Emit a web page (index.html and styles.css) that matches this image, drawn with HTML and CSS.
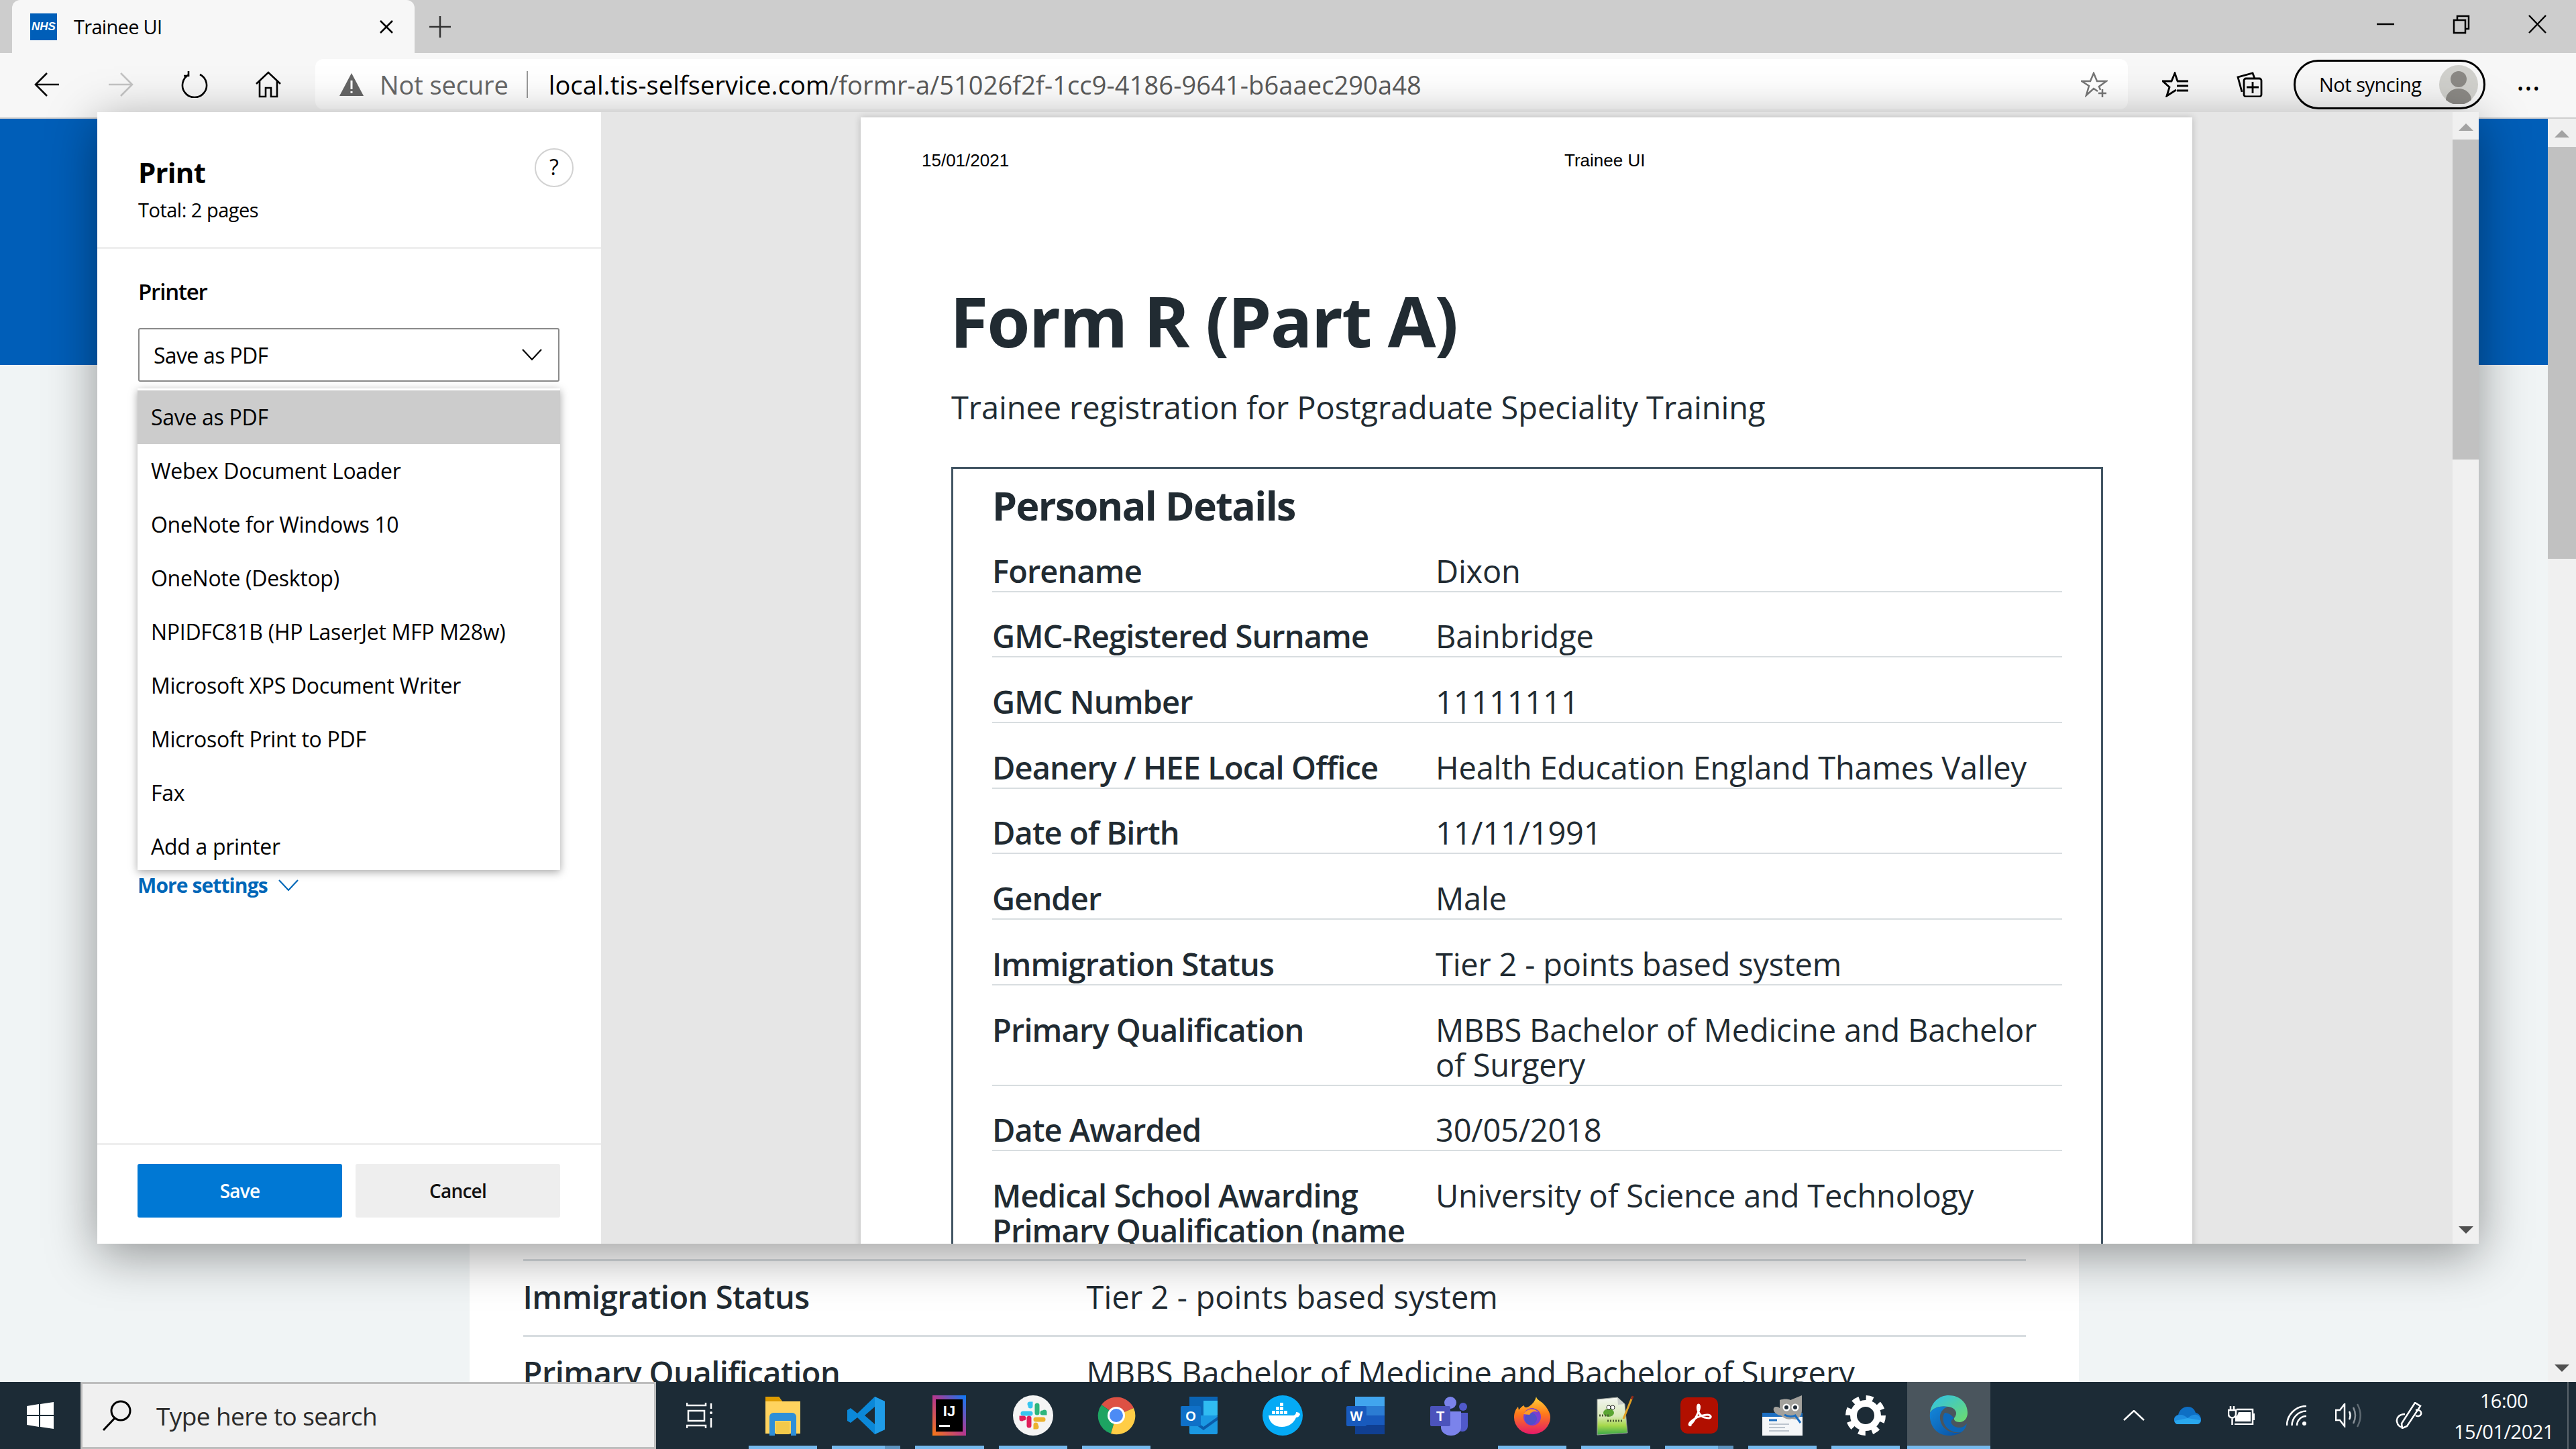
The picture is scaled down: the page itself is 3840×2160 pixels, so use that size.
FILE: index.html
```html
<!DOCTYPE html>
<html lang="en">
<head>
  <meta charset="UTF-8" />
  <title>Trainee UI</title>
  <link rel="stylesheet" href="styles.css">
</head>
<body>
<div class="screen">

  <!-- Browser tab strip -->
  <div class="tabstrip">
    <div class="tab">
      <span class="favicon">NHS</span>
      <span class="tab-title">Trainee UI</span>
      <svg class="tab-close" viewBox="0 0 24 24"><path d="M3 3l18 18M21 3L3 21"/></svg>
    </div>
    <svg class="tab-new" viewBox="0 0 32 32"><path d="M16 0v32M0 16h32"/></svg>
    <div class="window-controls">
      <svg viewBox="0 0 30 30"><path d="M2 15h26"/></svg>
      <svg viewBox="0 0 30 30"><path d="M4 9h17v19H4zM9 9V3h17v19h-5"/></svg>
      <svg viewBox="0 0 30 30"><path d="M3 2l25 26M28 2L3 28"/></svg>
    </div>
  </div>

  <!-- Address bar row -->
  <div class="toolbar">
    <svg class="nav-icon" viewBox="0 0 40 40"><path d="M38 20H3M20 3L3 20l17 17"/></svg>
    <svg class="nav-icon nav-off" viewBox="0 0 40 40"><path d="M2 20h35M20 3l17 17-17 17"/></svg>
    <svg class="nav-icon" viewBox="0 0 40 40"><path d="M12 5a18 18 0 1 0 16 0M11 0v7H4"/></svg>
    <svg class="nav-icon" viewBox="0 0 40 40"><path d="M2 19L20 2l18 17M7 15v23h9V25h8v13h9V15"/></svg>
    <div class="address">
      <svg class="warn" viewBox="0 0 38 36"><path d="M19 1l18 34H1z" fill="#666"/><path d="M19 12v13M19 28v3" stroke="#fff" stroke-width="3"/></svg>
      <span class="not-secure">Not secure</span>
      <span class="address-sep"></span>
      <span class="url"><b>local.tis-selfservice.com</b>/formr-a/51026f2f-1cc9-4186-9641-b6aaec290a48</span>
      <svg class="star" viewBox="0 0 40 38"><path d="M25 29l-6-4-11 10 4-14L1 14h13l5-12 5 12h14l-11 8 2 5"/><path d="M32 26v12M26 32h12"/></svg>
    </div>
    <svg class="tool-icon fav" viewBox="0 0 40 38"><path d="M23 14L19 2l-5 12H1l10 9-4 13 14-9"/><path d="M22 14h17M22 21h17M22 28h17" stroke-width="3"/></svg>
    <svg class="tool-icon coll" viewBox="0 0 40 38"><path d="M9 30L3 8l22-6 3 8"/><rect x="12" y="10" width="26" height="27" rx="3"/><path d="M25 15v17M16 23h18"/></svg>
    <div class="sync-pill">
      <span>Not syncing</span>
      <svg class="avatar" viewBox="0 0 58 58"><circle cx="29" cy="29" r="29" fill="#d0d0cc"/><circle cx="29" cy="21" r="12" fill="#8b8985"/><path d="M10 52a19 17 0 0 1 38 0 29 29 0 0 1-38 0z" fill="#8b8985"/></svg>
    </div>
    <span class="more-dots">&#8230;</span>
  </div>

  <!-- The page behind the print dialog -->
  <div class="page">
    <div class="page-main">
      <div class="page-head"></div>
      <div class="page-card">
        <div class="page-row"><span class="page-label">Immigration Status</span><span>Tier 2 - points based system</span></div>
        <div class="page-row"><span class="page-label">Primary Qualification</span><span>MBBS Bachelor of Medicine and Bachelor of Surgery</span></div>
      </div>
    </div>
    <div class="page-scroll">
      <span class="arrow-up"></span>
      <span class="thumb"></span>
      <span class="arrow-down"></span>
    </div>
  </div>

  <!-- Taskbar -->
  <div class="taskbar">
    <div class="start">
      <svg viewBox="0 0 40 40" width="40" height="40"><path d="M0 6l18-3v16H0zM20 3l20-3v19H20zM0 21h18v16L0 34zM20 21h20v19l-20-3z" fill="#fff"/></svg>
    </div>
    <div class="search">
      <svg class="search-icon" viewBox="0 0 48 48"><circle cx="30" cy="17" r="14"/><path d="M21 28L4 46"/></svg>
      <span>Type here to search</span>
    </div>
    <div class="task-apps">
      <div class="task"><svg viewBox="0 0 40 40" width="40" height="40" class="line-w"><path d="M1 1v4h28V1M1 39v-4h28v4M3 13h24v15H3z"/><circle cx="37" cy="16" r="2" fill="#fff" stroke="none"/><path d="M37 2v8M37 24v14"/></svg></div>
      <div class="task on"><svg viewBox="0 0 56 60" width="56" height="60"><path d="M2 2h20l5 7h27v48H2z" fill="#ffd35e"/><path d="M2 2h20l5 7H2z" fill="#dd9b00"/><path d="M8 60V32a6 6 0 0 1 6-6h28a6 6 0 0 1 6 6v28h-8V38H16v22z" fill="#2f8fd8"/><path d="M18 40h20v18H18z" fill="#f2c94a"/></svg></div>
      <div class="task on split"><svg viewBox="0 0 60 60" width="60" height="60"><path d="M43 2l15 7v42l-15 7L17 33l-10 8-5-3V22l5-3 10 8zM43 17L28 30l15 13z" fill="#0b88d8"/><path d="M43 2l15 7v42l-15 7z" fill="#1f9ce8"/></svg></div>
      <div class="task on"><svg viewBox="0 0 50 60" width="50" height="60"><defs><linearGradient id="ijg" x1="0" y1="1" x2="1" y2="0"><stop offset="0" stop-color="#f97a12"/><stop offset=".5" stop-color="#b5378e"/><stop offset="1" stop-color="#087cfa"/></linearGradient></defs><rect width="50" height="60" fill="url(#ijg)"/><rect x="5" y="6" width="40" height="48" fill="#000"/><text x="25" y="31" class="ij-text">IJ</text><rect x="10" y="44" width="16" height="3" fill="#fff"/></svg></div>
      <div class="task on"><svg viewBox="0 0 60 60" width="60" height="60"><circle cx="30" cy="30" r="30" fill="#f4f4f4"/><g stroke-width="7" stroke-linecap="round"><path d="M26 27H15" stroke="#36c5f0"/><path d="M25 13h1v3" stroke="#36c5f0"/><path d="M36 26V15" stroke="#2eb67d"/><path d="M47 25v1h-3" stroke="#2eb67d"/><path d="M34 36h11" stroke="#ecb22e"/><path d="M35 47h-1v-3" stroke="#ecb22e"/><path d="M24 34v11" stroke="#e01e5a"/><path d="M13 35v-1h3" stroke="#e01e5a"/></g></svg></div>
      <div class="task on"><svg viewBox="0 0 60 60" width="60" height="60"><path d="M30 30L8 14A28 28 0 0 1 56 19z" fill="#dd5144"/><path d="M30 30L8 14A28 28 0 0 0 22 57z" fill="#1da462"/><path d="M30 30L56 19A28 28 0 0 1 22 57z" fill="#ffcd46"/><circle cx="30" cy="30" r="13" fill="#fff"/><circle cx="30" cy="30" r="10" fill="#4c8bf5"/></svg></div>
      <div class="task"><svg viewBox="0 0 60 60" width="60" height="60"><rect x="15" y="2" width="42" height="30" fill="#0a64b4"/><rect x="15" y="30" width="42" height="28" rx="2" fill="#1a98e2"/><rect x="36" y="8" width="21" height="22" fill="#30bcf2"/><path d="M15 32l21 15 21-15v5L36 52 15 37z" fill="#0a5cab"/><rect x="2" y="16" width="30" height="30" rx="2" fill="#0f70c8"/><text x="17" y="38" class="tile-text">O</text></svg></div>
      <div class="task"><svg viewBox="0 0 60 60" width="60" height="60"><circle cx="30" cy="30" r="30" fill="#05aaf5"/><path d="M9 30h36c3 0 5-2 5-5 3 0 5 1 6 3-1 4-4 5-6 5-3 8-11 14-21 14-12 0-19-7-20-17z" fill="#fff"/><g fill="#fff"><rect x="14" y="23" width="5" height="5"/><rect x="20" y="23" width="5" height="5"/><rect x="26" y="23" width="5" height="5"/><rect x="32" y="23" width="5" height="5"/><rect x="20" y="17" width="5" height="5"/><rect x="26" y="17" width="5" height="5"/><rect x="26" y="11" width="5" height="5"/></g></svg></div>
      <div class="task"><svg viewBox="0 0 60 60" width="60" height="60"><rect x="14" y="2" width="44" height="56" rx="2" fill="#2b7cd3"/><rect x="14" y="2" width="44" height="14" fill="#41a5ee"/><rect x="14" y="30" width="44" height="14" fill="#185abd"/><rect x="14" y="44" width="44" height="14" fill="#103f91"/><rect x="1" y="16" width="30" height="30" rx="2" fill="#185abd"/><text x="16" y="38" class="tile-text">W</text></svg></div>
      <div class="task"><svg viewBox="0 0 60 60" width="60" height="60"><circle cx="32" cy="11" r="9" fill="#7b83eb"/><circle cx="51" cy="17" r="6" fill="#5059c9"/><path d="M42 26h16v20a8 8 0 0 1-16 0z" fill="#5059c9"/><path d="M18 24h30v24a15 12 0 0 1-30 0z" fill="#7b83eb"/><rect x="2" y="16" width="30" height="30" rx="2" fill="#4b53bc"/><text x="17" y="38" class="tile-text">T</text></svg></div>
      <div class="task on"><svg viewBox="0 0 54 56" width="54" height="56"><defs><linearGradient id="ffg" x1="0" y1="0" x2="0" y2="1"><stop offset="0" stop-color="#ffd53a"/><stop offset=".45" stop-color="#ff7a1a"/><stop offset="1" stop-color="#e5196a"/></linearGradient></defs><path d="M33 0c1 5 7 6 12 12 6 7 9 13 9 19a27 25 0 0 1-54 0c0-8 3-13 6-16l1 5c2-3 5-6 8-7 0 3 2 3 4 3 6-2 12-8 14-16z" fill="url(#ffg)"/><circle cx="27" cy="30" r="13" fill="#7a3fd0"/><circle cx="25" cy="33" r="9" fill="#4f4fc8"/><path d="M14 26c4-8 16-10 22-3-6-2-10-1-13 4z" fill="#ff9a28"/></svg></div>
      <div class="task on"><svg viewBox="0 0 56 60" width="56" height="60"><defs><linearGradient id="npg" x1="0" y1="0" x2="0" y2="1"><stop offset="0" stop-color="#f3f5f1"/><stop offset=".5" stop-color="#d8e8b8"/><stop offset=".75" stop-color="#a7d84a"/><stop offset="1" stop-color="#36a548"/></linearGradient></defs><path d="M1 6l30-3 11 10 4 43L1 59z" fill="url(#npg)" stroke="#9aa09a"/><path d="M31 3l11 10-10 1z" fill="#c8cdc8"/><ellipse cx="18" cy="26" rx="8" ry="6" fill="#5aa532"/><circle cx="18" cy="18" r="3" fill="#fff" stroke="#333"/><circle cx="24" cy="18" r="3" fill="#fff" stroke="#333"/><path d="M4 30h16M16 38h22" stroke="#4a5a30" stroke-width="3" stroke-dasharray="2 2"/><path d="M40 35L53 3" stroke="#e0a022" stroke-width="3"/><path d="M52 6l2-5" stroke="#8f2a1c" stroke-width="3"/></svg></div>
      <div class="task on split"><svg viewBox="0 0 56 54" width="56" height="54"><rect width="56" height="54" rx="10" fill="#b10f00"/><path d="M14 41c6-3 17-25 14-29-2-4-4 4-1 10 3 6 9 9 15 9 5 0 4-5-2-5-10 0-21 6-26 12-2 3 0 5 2 3" fill="none" stroke="#fff" stroke-width="3"/></svg></div>
      <div class="task on"><svg viewBox="0 0 60 62" width="60" height="62"><rect y="27" width="60" height="34" fill="#f4f6f8"/><rect y="27" width="60" height="6" fill="#1c6fc2"/><path d="M10 38h12" stroke="#1c6fc2" stroke-width="3"/><path d="M10 44h30M10 49h24M10 54h30" stroke="#a9b4bf" stroke-width="1.5"/><path d="M26 8c6-2 12-2 16 0l17-7v22c0 8-4 12-9 14l-6-1c-6 2-12-1-16-5-5 0-13-5-11-11 2-3 7-2 9 0z" fill="#a3a19c"/><circle cx="36" cy="19" r="5.5" fill="#fff"/><circle cx="49" cy="19" r="5.5" fill="#fff"/><circle cx="36" cy="19" r="3" fill="#222d38"/><circle cx="49" cy="19" r="3" fill="#222d38"/><path d="M33 30c5 3 12 3 16 1l8 11" stroke="#1c6fc2" stroke-width="3"/></svg></div>
      <div class="task on"><svg viewBox="0 0 60 60" width="60" height="60"><circle cx="30" cy="30" r="18" fill="none" stroke="#fff" stroke-width="10"/><circle cx="30" cy="30" r="26" fill="none" stroke="#fff" stroke-width="8" stroke-dasharray="10.4 10"/></svg></div>
      <div class="task on active"><svg viewBox="0 0 60 60" width="60" height="60"><defs><linearGradient id="edg1" x1="0" y1="0" x2="1" y2="1"><stop offset="0" stop-color="#2ec0ea"/><stop offset="1" stop-color="#6fdc6a"/></linearGradient><linearGradient id="edg2" x1="0" y1="0" x2="1" y2="1"><stop offset="0" stop-color="#1288dc"/><stop offset="1" stop-color="#0b4f9f"/></linearGradient></defs><path d="M2 26C4 10 16 0 30 0c16 0 28 11 28 26 0 9-6 14-12 14-5 0-9-3-8-6 6-7 3-15-8-17C18 15 6 18 2 26z" fill="url(#edg1)"/><path d="M2 26c5-8 16-11 26-9-7 3-12 9-11 18 1 12 12 21 24 21 4 0 7-1 9-2-5 4-12 6-20 6C13 60 0 46 2 26z" fill="url(#edg2)"/><path d="M24 26c-5 7-3 19 8 26 7 4 14 4 18 2 4-3 6-7 7-12-4 6-12 8-19 4-6-4-6-9 0-12-5-6-10-8-14-8z" fill="#0d66b8"/></svg></div>
    </div>
    <div class="tray">
      <svg class="tray-chevron line-w" viewBox="0 0 32 16"><path d="M1 15L16 1l15 14"/></svg>
      <svg class="tray-cloud" viewBox="0 0 40 26"><path d="M8 26a7 7 0 0 1-2-14C8 4 14 0 20 0c6 0 10 3 12 9 5 1 8 5 8 10 0 4-3 7-7 7z" fill="#0e6fc4"/><path d="M6 26c-4 0-6-3-6-6 0-5 4-8 9-8 5 0 8 2 11 5 4-3 8-6 13-5 4 1 7 4 7 8 0 3-2 6-6 6z" fill="#1f8ee0"/><path d="M4 26c-2-1-3-3-3-5l19-4 19 3c0 3-2 6-6 6z" fill="#2aa8ee"/></svg>
      <svg class="tray-power line-w" viewBox="0 0 40 28"><path d="M4 0v6M9 0v6M1 6h11v6a5.5 5.5 0 0 1-11 0zM6.500 17v11M13 5h24v22H10"/><path d="M16 9h18v14H11v-7l3-2z" fill="#fff" stroke="none"/><rect x="37" y="11" width="3" height="10" fill="#fff" stroke="none"/></svg>
      <svg class="tray-wifi line-w" viewBox="0 0 30 30"><path d="M1 30A29 29 0 0 1 30 1M8.500 30A21.500 21.500 0 0 1 30 8.500M16 30A14 14 0 0 1 30 16"/><circle cx="27" cy="27" r="3" fill="#fff" stroke="none"/></svg>
      <svg class="tray-sound line-w" viewBox="0 0 40 36"><path d="M14 1L7 10H1v15h6l7 9z"/><path d="M21 12c2 4 2 8 0 12"/><path d="M27 6c4 8 4 16 0 24" stroke="#8a9299"/><path d="M33 1c6 11 6 23 0 34" stroke="#5f6a72"/></svg>
      <svg class="tray-pen line-w" viewBox="0 0 40 40"><path d="M29 1l8 5-20 30-7 3-1-7z"/><path d="M14 18c-8 0-13 5-12 11s5 9 9 8M30 12c6-1 9 2 8 6-1 3-5 4-8 2"/></svg>
      <div class="clock"><span>16:00</span><span>15/01/2021</span></div>
    </div>
  </div>

  <!-- Print dialog sits over the page -->
  <div class="print-dialog">
    <div class="print-panel">
      <div class="print-head">
        <div>
          <h1>Print</h1>
          <p>Total: 2 pages</p>
        </div>
        <span class="help">?</span>
      </div>
      <div class="print-body">
        <h2>Printer</h2>
        <div class="select">
          <span>Save as PDF</span>
          <svg class="chevron" viewBox="0 0 30 18"><path d="M1 1l14 15L29 1"/></svg>
        </div>
        <div class="more-settings">
          <span>More settings</span>
          <svg class="chevron" viewBox="0 0 30 18"><path d="M1 1l14 15L29 1"/></svg>
        </div>
        <ul class="printer-menu">
          <li class="selected">Save as PDF</li>
          <li>Webex Document Loader</li>
          <li>OneNote for Windows 10</li>
          <li>OneNote (Desktop)</li>
          <li>NPIDFC81B (HP LaserJet MFP M28w)</li>
          <li>Microsoft XPS Document Writer</li>
          <li>Microsoft Print to PDF</li>
          <li>Fax</li>
          <li>Add a printer</li>
        </ul>
      </div>
      <div class="print-foot">
        <button class="btn-save">Save</button>
        <button class="btn-cancel">Cancel</button>
      </div>
    </div>

    <div class="preview">
      <div class="paper">
        <div class="paper-header">
          <span>15/01/2021</span>
          <span>Trainee UI</span>
        </div>
        <h1>Form R (Part A)</h1>
        <p class="lead">Trainee registration for Postgraduate Speciality Training</p>
        <div class="details">
          <h2>Personal Details</h2>
          <div class="row"><b>Forename</b><span>Dixon</span></div>
          <div class="row"><b>GMC-Registered Surname</b><span>Bainbridge</span></div>
          <div class="row"><b>GMC Number</b><span>11111111</span></div>
          <div class="row"><b>Deanery / HEE Local Office</b><span>Health Education England Thames Valley</span></div>
          <div class="row"><b>Date of Birth</b><span>11/11/1991</span></div>
          <div class="row"><b>Gender</b><span>Male</span></div>
          <div class="row"><b>Immigration Status</b><span>Tier 2 - points based system</span></div>
          <div class="row"><b>Primary Qualification</b><span>MBBS Bachelor of Medicine and Bachelor of Surgery</span></div>
          <div class="row"><b>Date Awarded</b><span>30/05/2018</span></div>
          <div class="row"><b>Medical School Awarding Primary Qualification (name and country)</b><span>University of Science and Technology</span></div>
        </div>
      </div>
    </div>
    <div class="preview-scroll">
      <span class="arrow-up"></span>
      <span class="thumb"></span>
      <span class="arrow-down"></span>
    </div>
  </div>

</div>
</body>
</html>
```
FILE: styles.css
```css
* {
  box-sizing: border-box;
}

body {
  margin: 0;
  font-family: 'Open Sans', 'Noto Sans', sans-serif;
  color: #000;
}

.screen {
  position: relative;
  width: 3840px;
  height: 2160px;
  overflow: hidden;
  display: flex;
  flex-direction: column;
}

svg {
  fill: none;
  flex: none;
}

/* Tab strip */
.tabstrip {
  height: 79px;
  flex: none;
  display: flex;
  align-items: center;
  background: #cdcdcd;
  padding-left: 18px;
}

.tab {
  width: 600px;
  height: 79px;
  display: flex;
  align-items: center;
  padding: 0 30px 0 27px;
  background: #f7f7f7;
  border-radius: 12px 12px 0 0;
}

.favicon {
  width: 40px;
  height: 40px;
  background: #005eb8;
  color: #fff;
  font: italic bold 17px/40px 'Liberation Sans', sans-serif;
  text-align: center;
  margin-right: 25px;
}

.tab-title {
  flex: 1;
  font-size: 29px;
  letter-spacing: -0.7px;
}

.tab-close {
  width: 24px;
  height: 24px;
  stroke: #000;
  stroke-width: 2.5;
}

.tab-new {
  width: 32px;
  height: 32px;
  margin-left: 22px;
  stroke: #333;
  stroke-width: 2.5;
}

.window-controls {
  margin-left: auto;
  display: flex;
  gap: 83px;
  padding-right: 43px;
  margin-top: -8px;
}

.window-controls svg {
  width: 30px;
  height: 30px;
  stroke: #000;
  stroke-width: 2.5;
}

/* Toolbar */
.toolbar {
  height: 98px;
  flex: none;
  display: flex;
  align-items: center;
  background: #f7f7f7;
  border-bottom: 2px solid #cfcfcf;
  padding: 0 0 3px 50px;
}

.nav-icon {
  width: 40px;
  height: 40px;
  margin-right: 70px;
  stroke: #000;
  stroke-width: 2.6;
}

.nav-off {
  stroke: #c4c4c4;
}

.address {
  width: 2702px;
  height: 75px;
  margin-left: -20px;
  display: flex;
  align-items: center;
  background: #fff;
  border-radius: 12px;
  padding-left: 35px;
  font-size: 38px;
  letter-spacing: 0.1px;
}

.warn {
  width: 38px;
  height: 36px;
  margin-right: 23px;
}

.not-secure {
  color: #666;
  font-size: 38px;
  letter-spacing: -0.1px;
}

.address-sep {
  width: 2px;
  height: 40px;
  background: #999;
  margin: 0 31px 0 27px;
}

.url {
  flex: 1;
  color: #5a5a5a;
}

.url b {
  font-weight: 400;
  color: #000;
}

.star {
  width: 40px;
  height: 38px;
  margin-right: 30px;
  stroke: #767676;
  stroke-width: 2.5;
}

.tool-icon {
  width: 40px;
  height: 38px;
  stroke: #000;
  stroke-width: 2.8;
}

.fav {
  margin-left: 51px;
}

.coll {
  margin-left: 70px;
}

.sync-pill {
  width: 286px;
  height: 74px;
  margin-left: 46px;
  display: flex;
  align-items: center;
  justify-content: space-between;
  padding: 0 8px 0 35px;
  background: #f7f7f7;
  border: 3px solid #000;
  border-radius: 37px;
  font-size: 29px;
  letter-spacing: -0.5px;
}

.avatar {
  width: 58px;
  height: 58px;
}

.more-dots {
  margin-left: 46px;
  font-size: 46px;
  line-height: 40px;
  margin-top: -18px;
  letter-spacing: 2px;
}

/* Page behind the dialog */
.page {
  flex: 1;
  display: flex;
  min-height: 0;
  background: #f0f4f5;
}

.page-main {
  flex: 1;
  min-width: 0;
  overflow: hidden;
}

.page-head {
  height: 367px;
  background: #005eb8;
}

.page-card {
  width: 2399px;
  height: 1600px;
  margin: 0 auto;
  padding: 1333px 79px 0 80px;
  background: #fff;
  color: #212b32;
  font-size: 47px;
  line-height: 56px;
  letter-spacing: 0.1px;
}

.page-row {
  display: grid;
  grid-template-columns: 840px 1fr;
  height: 113px;
  padding-top: 25px;
  border-top: 3px solid #d8dde0;
  white-space: nowrap;
}

.page-label {
  font-weight: 600;
  letter-spacing: -0.5px;
}

.page-scroll,
.preview-scroll {
  width: 42px;
  flex: none;
  position: relative;
  background: #f0f0f0;
  display: flex;
  flex-direction: column;
  align-items: center;
}

.preview-scroll {
  width: 39px;
}

.arrow-up,
.arrow-down {
  width: 0;
  height: 0;
  flex: none;
  border-left: 11px solid transparent;
  border-right: 11px solid transparent;
}

.arrow-up {
  border-bottom: 11px solid #a3a3a3;
  margin-top: 17px;
}

.arrow-down {
  border-top: 11px solid #505050;
  margin-top: auto;
  margin-bottom: 15px;
}

.thumb {
  width: 100%;
  background: #c1c1c1;
  flex: none;
  height: 614px;
  margin-top: 14px;
}

.preview-scroll .thumb {
  height: 477px;
  margin-top: 13px;
}

/* Taskbar */
.taskbar {
  height: 100px;
  flex: none;
  display: flex;
  background: #1c2b36;
  color: #fff;
}

.start {
  width: 120px;
  display: flex;
  align-items: center;
  justify-content: center;
}

.search {
  width: 858px;
  display: flex;
  align-items: center;
  background: #f0f0f0;
  border: 3px solid #bebebe;
  color: #2b2b2b;
  font-size: 37px;
  padding-left: 27px;
  letter-spacing: -0.6px;
}

.search-icon {
  width: 48px;
  height: 48px;
  margin-right: 35px;
  stroke: #000;
  stroke-width: 3;
}

.task-apps {
  display: flex;
  padding-left: 3px;
}

.task {
  width: 124.14px;
  position: relative;
  display: flex;
  align-items: center;
  justify-content: center;
}

.task.on::after {
  content: "";
  position: absolute;
  left: 11px;
  right: 11px;
  bottom: 0;
  height: 5px;
  background: #76b9ed;
}

.task.split::before {
  content: "";
  position: absolute;
  right: 11px;
  width: 23px;
  bottom: 0;
  height: 5px;
  background: #5d93bf;
  z-index: 1;
}

.task.active {
  background: #4a555d;
}

.task.active::after {
  left: 0;
  right: 0;
}

.line-w {
  stroke: #fff;
  stroke-width: 2.5;
}

.ij-text,
.tile-text {
  fill: #fff;
  font-family: 'Liberation Sans', sans-serif;
  text-anchor: middle;
}

.ij-text {
  font-size: 22px;
  font-weight: 700;
}

.tile-text {
  font-size: 20px;
  font-weight: 700;
}

.tray {
  flex: 1;
  display: flex;
  align-items: center;
  position: relative;
  border-right: 2px solid #59636b;
  margin-right: 11px;
}

.tray-chevron {
  width: 32px;
  height: 16px;
  margin-left: 198px;
}

.tray-cloud {
  width: 40px;
  height: 26px;
  margin-left: 44px;
}

.tray-power {
  width: 40px;
  height: 28px;
  margin-left: 40px;
}

.tray-wifi {
  width: 30px;
  height: 30px;
  margin-left: 47px;
}

.tray-sound {
  width: 40px;
  height: 36px;
  margin-left: 43px;
}

.tray-pen {
  width: 40px;
  height: 40px;
  margin-left: 50px;
}

.clock {
  margin-left: 47px;
  display: flex;
  flex-direction: column;
  align-items: center;
  gap: 14px;
  margin-top: 2px;
  font-size: 29px;
  line-height: 32px;
  letter-spacing: -0.5px;
}

/* Print dialog */
.print-dialog {
  position: absolute;
  left: 145px;
  top: 167px;
  width: 3550px;
  height: 1687px;
  display: flex;
  background: #fff;
  box-shadow: 0 16px 70px rgba(0, 0, 0, 0.4);
}

.print-panel {
  width: 751px;
  flex: none;
  display: flex;
  flex-direction: column;
  background: #fff;
}

.print-head {
  height: 204px;
  padding: 62px 41px 0 61px;
  display: flex;
  justify-content: space-between;
  align-items: flex-start;
  border-bottom: 3px solid #eeeeee;
}

.print-head h1 {
  margin: 0;
  font-size: 42px;
  line-height: 56px;
  font-weight: 700;
  letter-spacing: -0.8px;
}

.print-head p {
  margin: 10px 0 0;
  font-size: 29px;
  line-height: 36px;
  letter-spacing: -0.5px;
}

.help {
  width: 58px;
  height: 58px;
  margin-top: -8px;
  border: 2px solid #d2d2d2;
  border-radius: 50%;
  font-size: 32px;
  line-height: 52px;
  text-align: center;
}

.print-body {
  flex: 1;
  position: relative;
  padding: 44px 61px 0;
}

.print-body h2 {
  margin: 0;
  font-size: 33px;
  line-height: 40px;
  font-weight: 600;
  letter-spacing: -1.2px;
}

.select {
  width: 628px;
  height: 80px;
  margin-top: 34px;
  display: flex;
  align-items: center;
  justify-content: space-between;
  padding: 0 24px 0 21px;
  border: 2px solid #8a8a8a;
  border-radius: 3px;
  font-size: 32px;
  letter-spacing: -0.7px;
}

.chevron {
  width: 30px;
  height: 18px;
  stroke: #000;
  stroke-width: 2.2;
}

.more-settings {
  margin-top: 731px;
  margin-left: -1px;
  display: flex;
  align-items: center;
  gap: 16px;
  color: #0067b8;
  font-size: 30px;
  line-height: 40px;
  font-weight: 700;
  letter-spacing: -0.9px;
}

.more-settings .chevron {
  stroke: #0067b8;
}

.printer-menu {
  position: absolute;
  left: 60px;
  top: 208px;
  width: 630px;
  height: 718px;
  margin: 0;
  padding: 3px 0 0;
  list-style: none;
  background: #fff;
  box-shadow: 0 3px 12px rgba(0, 0, 0, 0.35);
}

.printer-menu li {
  height: 80px;
  padding-left: 20px;
  font-size: 32px;
  line-height: 80px;
  letter-spacing: -0.3px;
  white-space: nowrap;
}

.printer-menu .selected {
  background: #cccccc;
}

.print-foot {
  height: 150px;
  padding: 28px 60px 0;
  display: flex;
  gap: 20px;
  border-top: 3px solid #eeeeee;
}

.print-foot button {
  width: 305px;
  height: 80px;
  border: none;
  border-radius: 3px;
  font-family: inherit;
  font-size: 28px;
  font-weight: 600;
  letter-spacing: -0.8px;
}

.btn-save {
  background: #0078d4;
  color: #fff;
}

.btn-cancel {
  background: #eeeeee;
  color: #111;
}

/* Preview pane */
.preview {
  flex: 1;
  min-width: 0;
  overflow: hidden;
  background: #e6e6e6;
  padding: 8px 0 0 387px;
}

.paper {
  width: 1985px;
  height: 1800px;
  background: #fff;
  box-shadow: 0 0 10px rgba(0, 0, 0, 0.2);
  padding: 0 132px 0 91px;
  color: #212b32;
}

.paper-header {
  display: flex;
  padding-top: 48px;
  font: 26px/32px 'Liberation Sans', sans-serif;
  color: #000;
}

.paper-header span:first-child {
  width: 958px;
}

.paper h1 {
  margin: 0;
  margin-top: 158px;
  margin-left: 42px;
  font-size: 104px;
  line-height: 130px;
  font-weight: 700;
  letter-spacing: -1.8px;
}

.lead {
  margin: 34px 0 0 44px;
  font-size: 47px;
  line-height: 60px;
  letter-spacing: -0.1px;
}

.details {
  margin: 59px 0 0 44px;
  width: 1717px;
  height: 1300px;
  border: 3px solid #425563;
  border-bottom: 0;
  padding: 22px 58px 0 58px;
}

.details h2 {
  margin: 0 0 2px;
  font-size: 59px;
  line-height: 64px;
  font-weight: 700;
  letter-spacing: -1.6px;
}

.row {
  display: grid;
  grid-template-columns: 661px 1fr;
  margin-top: 39.7px;
  padding-bottom: 4px;
  border-bottom: 2px solid #d8dde0;
  font-size: 47px;
  line-height: 52px;
  letter-spacing: -0.2px;
}

.row b {
  font-weight: 600;
  padding-right: 20px;
  letter-spacing: -0.9px;
}
```
